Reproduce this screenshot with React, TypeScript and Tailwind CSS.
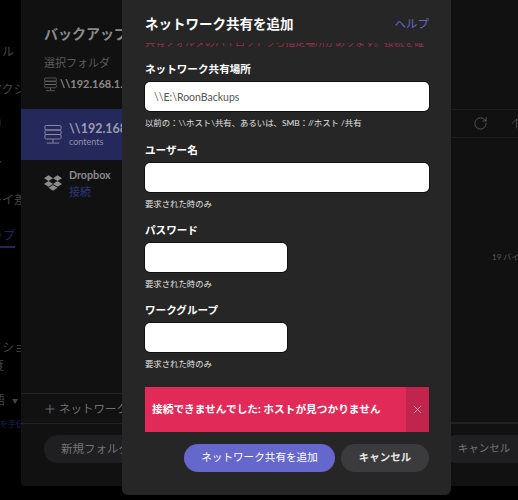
import { ArrowUp, Plus, RotateCw, X } from "lucide-react";
import { FaDropbox } from "react-icons/fa";

const ServerIcon = ({ className }: { className: string }) => (
  <svg viewBox="0 0 20 22" fill="none" stroke="currentColor" strokeWidth="1" className={className}>
    <rect x="1" y="1" width="18" height="5" rx="1.5" />
    <rect x="1" y="6" width="18" height="5" rx="1.5" />
    <rect x="1" y="11" width="18" height="5" rx="1.5" />
    <path d="M10 16v4M3 20.5h14" />
  </svg>
);

// the nav behind the dialog is pushed off the left edge, only the ends of its labels show
const Sidebar = () => (
  <div className="w-[21px] shrink-0 overflow-hidden text-[12px] leading-[18px] text-[#454545] flex flex-col whitespace-nowrap">
    <div className="h-[43px] shrink-0" />
    <div className="h-[18px] shrink-0 ml-[-10px]">イル</div>
    <div className="h-[20px] shrink-0" />
    <div className="h-[18px] shrink-0 ml-[-10px]">アクション</div>
    <div className="h-[17px] shrink-0" />
    <div className="h-[18px] shrink-0 ml-[-9px]">リ</div>
    <div className="h-[19px] shrink-0" />
    <div className="h-[18px] shrink-0 ml-[-9px]">ト</div>
    <div className="h-[20px] shrink-0" />
    <div className="h-[18px] shrink-0 ml-[-10px]">レイ差</div>
    <div className="h-[18px] shrink-0" />
    <div className="h-[18px] shrink-0 ml-[-9px] text-[#23265c]">ップ</div>
    <div className="h-[2px] w-[15px] shrink-0 mt-[1px] bg-[#23265c]" />
    <div className="h-[91px] shrink-0" />
    <div className="h-[18px] shrink-0 ml-[-10px]">ドショット</div>
    <div className="h-[18px] shrink-0 ml-[-8px]">度</div>
    <div className="h-[17px] shrink-0" />
    <div className="h-[18px] shrink-0 ml-[-7px] flex items-center gap-[7px]">語<span className="text-[6px]">▼</span></div>
    <div className="h-[5px] shrink-0" />
    <div className="h-[18px] shrink-0 text-[8px] text-[#1f2255]">を手伝う</div>
  </div>
);

const Panel = () => (
  <div className="w-[520px] h-[486px] shrink-0 bg-[#111112] rounded-b flex flex-col">
    <div className="flex flex-1 min-h-0">
      <div className="w-[430px] shrink-0 flex flex-col">
        <div className="h-[109px] pl-[23px] pt-[24px]">
          <div className="text-[14px] font-bold text-[#8a8a8a] leading-[20px] whitespace-nowrap">バックアップ先を選択</div>
          <div className="text-[11px] text-[#5c5c5c] mt-[12px] leading-[14px]">選択フォルダ</div>
          <div className="flex items-center gap-[3px] mt-[6px] text-[11px] font-bold text-[#8a8a8a] leading-[16px]">
            <ServerIcon className="w-[13px] h-[15px] text-[#777]" />
            \\192.168.1.1
          </div>
        </div>
        <div className="h-[51px] bg-[#25285a] pl-[23px] flex items-center gap-[7px]">
          <ServerIcon className="w-[18px] h-[21px] text-[#8f91ad]" />
          <div className="leading-none">
            <div className="text-[12.5px] font-bold text-[#9a9bb0] whitespace-nowrap">\\192.168.1.1</div>
            <div className="text-[9px] text-[#8f91ad] mt-[1px]">contents</div>
          </div>
        </div>
        <div className="pl-[23px] pt-[10px] flex items-center gap-[7px]">
          <FaDropbox className="w-[18px] h-[18px] text-[#8c8c8c]" />
          <div className="leading-none">
            <div className="text-[10.7px] font-bold text-[#8a8a8a]">Dropbox</div>
            <div className="text-[11px] text-[#2f3278] mt-[5px]">接続</div>
          </div>
        </div>
        <div className="mt-auto h-[30px] border-t border-[#222] flex items-center pl-[22px] gap-[2px] text-[11.5px] text-[#6f6f6f] whitespace-nowrap">
          <Plus className="w-[14px] h-[14px] text-[#777]" strokeWidth={1.5} />
          ネットワーク共有を追加
        </div>
      </div>
      <div className="flex-1 flex flex-col">
        <div className="h-[109px]" />
        <div className="h-[29px] border-y border-[#1c1c1c] flex items-center pl-[22px] gap-[21px] text-[#666]">
          <RotateCw className="w-[15px] h-[15px] shrink-0" strokeWidth={1.25} />
          <ArrowUp className="w-[15px] h-[15px] shrink-0 text-[#555]" strokeWidth={1.25} />
        </div>
        <div className="pl-[41px] pt-[113px] text-[8px] text-[#5a5a5a] whitespace-nowrap">19 バイト</div>
        <div className="mt-auto border-b border-[#222]" />
      </div>
    </div>
    <div className="h-[63px] border-t border-[#222] flex pl-[23px] pt-[11px]">
      <div className="w-[130px] h-[28px] rounded-full bg-[#1f1f21] flex items-center pl-[17px] text-[11.5px] text-[#747474] whitespace-nowrap">新規フォルダ</div>
      <div className="ml-[271px] w-[100px] h-[28px] rounded-full bg-[#1f1f21] flex items-center pl-[15px] text-[10.5px] text-[#747474] whitespace-nowrap">キャンセル</div>
    </div>
  </div>
);

const Field = ({ label, hint, value, narrow, mt }: { label: string; hint: string; value?: string; narrow?: boolean; mt: string }) => (
  <div className={mt}>
    <div className="text-[10.6px] font-bold text-white leading-[14px]">{label}</div>
    <div className={`mt-[6px] h-[29px] bg-white rounded-[5px] shadow-[0_0_0_1px_#111] flex items-center pl-[9px] pt-[2px] text-[10.5px] text-[#555] ${narrow ? "w-[142px]" : "w-full"}`}>
      {value}
    </div>
    <div className="mt-[6px] text-[8.4px] text-[#e0e0e0] leading-[12px] whitespace-nowrap">{hint}</div>
  </div>
);

const Modal = () => (
  <div className="absolute left-[122px] top-0 w-[329px] h-[495px] bg-[#262626] rounded-b-md pl-[23px] pr-[22px] flex flex-col">
    <div className="h-[43px] pt-[14px] flex justify-between items-start">
      <div className="text-[13.5px] font-bold text-white leading-[20px] whitespace-nowrap">ネットワーク共有を追加</div>
      <div className="text-[11.5px] text-[#6667cc] leading-[20px]">ヘルプ</div>
    </div>
    <div className="h-[4px] overflow-hidden">
      <div className="text-[10px] leading-[12px] mt-[-7px] text-[#9c2f4b] whitespace-nowrap">共有フォルダのパイロットうち指定場所があります。接続を確</div>
    </div>
    <Field mt="mt-[15px]" label="ネットワーク共有場所" value="\\E:\RoonBackups" hint="以前の：\\ホスト\共有、あるいは、SMB：//ホスト /共有" />
    <Field mt="mt-[14px]" label="ユーザー名" hint="要求された時のみ" />
    <Field mt="mt-[13px]" narrow label="パスワード" hint="要求された時のみ" />
    <Field mt="mt-[13px]" narrow label="ワークグループ" hint="要求された時のみ" />
    <div className="mt-[17px] h-[45px] bg-[#e22a59] flex shrink-0">
      <div className="flex-1 flex items-center pl-[7px] text-[10.7px] font-bold text-white whitespace-nowrap">接続できませんでした: ホストが見つかりません</div>
      <div className="w-[23px] bg-[#c1254e] flex items-center justify-center">
        <X className="w-[13px] h-[13px] text-[#f0d0d8]" strokeWidth={1.25} />
      </div>
    </div>
    <div className="mt-[12px] flex justify-end gap-[6px]">
      <div className="w-[151px] h-[28px] rounded-full bg-[#6667cc] flex items-center justify-center text-[10.6px] text-white whitespace-nowrap">ネットワーク共有を追加</div>
      <div className="w-[88px] h-[28px] rounded-full bg-[#3b3b3d] flex items-center justify-center text-[10.5px] font-bold text-[#e8e8e8] whitespace-nowrap">キャンセル</div>
    </div>
  </div>
);

export default function App() {
  return (
    <div className="relative w-[518px] h-[500px] overflow-hidden bg-black flex font-['Lato','Noto_Sans_CJK_JP',sans-serif]">
      <Sidebar />
      <Panel />
      <Modal />
    </div>
  );
}
